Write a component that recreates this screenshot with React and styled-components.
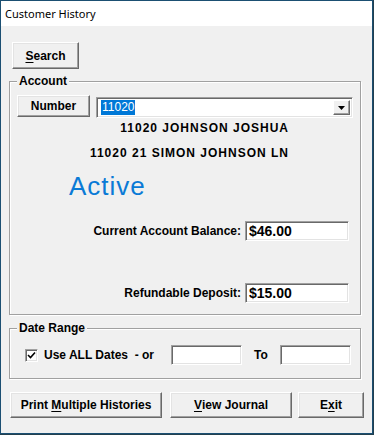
import React from 'react'
import styled, { createGlobalStyle } from 'styled-components'

const GlobalStyle = createGlobalStyle`
  html, body {
    margin: 0;
    padding: 0;
    background: #23404f;
  }
  body {
    font-family: "Liberation Sans", Arial, sans-serif;
  }
`

const Window = styled.div`
  width: 371px;
  height: 432px;
  border: 1px solid #1b4f72;
  background: #f0f0f0;
  display: flex;
  flex-direction: column;
`

const TitleBar = styled.div`
  height: 25px;
  background: #fff;
  display: flex;
  align-items: center;
  padding-left: 4px;
  font-family: "Noto Sans", "Open Sans", sans-serif;
  font-size: 11px;
  color: #000;
`

const Body = styled.div`
  flex: 1;
  padding: 16px 10px 0 8px;
  display: flex;
  flex-direction: column;
  align-items: flex-start;
`

const Button = styled.button`
  box-sizing: border-box;
  width: ${p => p.$w}px;
  height: ${p => p.$h || 26}px;
  margin: 0;
  margin-left: ${p => p.$ml || 0}px;
  padding: 0;
  background: #f0f0f0;
  border: 1px solid;
  border-color: #fff #696969 #696969 #fff;
  box-shadow: inset -1px -1px 0 #a0a0a0, inset 1px 1px 0 #e3e3e3;
  font-family: "Liberation Sans", Arial, sans-serif;
  font-weight: bold;
  font-size: 12px;
  color: #000;
  display: flex;
  align-items: center;
  justify-content: center;

  & u {
    text-decoration: underline;
    text-underline-offset: 2px;
  }
`

const Group = styled.div`
  position: relative;
  box-sizing: border-box;
  width: 352px;
  margin-top: ${p => p.$mt}px;
  border: 1px solid #a0a0a0;
  box-shadow: inset 1px 1px 0 #fff, 1px 1px 0 #fff;
  padding: ${p => p.$pad};
  display: flex;
  flex-direction: column;
`

const Legend = styled.span`
  position: absolute;
  top: -8px;
  left: 7px;
  padding: 0 2px;
  background: #f0f0f0;
  font-weight: bold;
  font-size: 12px;
  line-height: 14px;
  color: #000;
`

const Row = styled.div`
  display: flex;
  align-items: ${p => p.$align || 'center'};
  margin-top: ${p => p.$mt || 0}px;
`

const Sunken = styled.div`
  box-sizing: border-box;
  width: ${p => p.$w}px;
  height: ${p => p.$h || 20}px;
  margin-left: ${p => p.$ml || 0}px;
  margin-top: ${p => p.$mt || 0}px;
  background: #fff;
  border: 1px solid;
  border-color: #a0a0a0 #fff #fff #a0a0a0;
  box-shadow: inset 1px 1px 0 #696969, inset -1px -1px 0 #e3e3e3;
  display: flex;
  align-items: center;
  padding-left: 3px;
  font-weight: bold;
  font-size: 14px;
  color: #000;
`

const Combo = styled(Sunken)`
  padding: 2px 2px 2px 4px;
  align-items: stretch;
  font-weight: normal;
  font-size: 12px;
`

const Selected = styled.span`
  align-self: center;
  background: #0078d7;
  color: #fff;
  padding: 1px 1px;
  line-height: 13px;
`

const DropButton = styled.div`
  margin-left: auto;
  box-sizing: border-box;
  width: 17px;
  background: #f0f0f0;
  border: 1px solid;
  border-color: #fff #696969 #696969 #fff;
  box-shadow: inset -1px -1px 0 #a0a0a0;
  display: flex;
  align-items: center;
  justify-content: center;
`

const InfoLine = styled.div`
  width: 272px;
  margin-top: ${p => p.$mt}px;
  text-align: right;
  font-weight: bold;
  font-size: 12px;
  line-height: 14px;
  letter-spacing: 1px;
  color: #000;
`

const Status = styled.div`
  margin-top: 13px;
  margin-left: 52px;
  font-size: 26px;
  line-height: 26px;
  letter-spacing: 1px;
  color: #0a7ad6;
`

const FieldLabel = styled.div`
  width: 224px;
  text-align: right;
  padding-right: 4px;
  font-weight: bold;
  font-size: 12px;
  color: #000;
`

const Check = styled.div`
  box-sizing: border-box;
  width: 13px;
  height: 13px;
  background: #fff;
  border: 1px solid;
  border-color: #a0a0a0 #fff #fff #a0a0a0;
  box-shadow: inset 1px 1px 0 #696969, inset -1px -1px 0 #e3e3e3;
  display: flex;
  align-items: center;
  justify-content: center;
`

const Text = styled.span`
  margin-left: ${p => p.$ml || 0}px;
  font-weight: bold;
  font-size: 12px;
  color: #000;
  white-space: pre;
`

const Footer = styled.div`
  display: flex;
  margin-top: 13px;
  margin-left: 1px;
`

export default function App() {
  return (
    <>
      <GlobalStyle />
      <Window>
        <TitleBar>Customer History</TitleBar>
        <Body>
          <Button $w={67} $h={27} $ml={3}>
            <u>S</u>earch
          </Button>

          <Group $mt={12} $pad="13px 0 11px 7px">
            <Legend>Account</Legend>
            <Row $align="flex-start">
              <Button $w={73} $h={22}>Number</Button>
              <Combo $w={257} $h={21} $ml={6} $mt={2}>
                <Selected>11020</Selected>
                <DropButton>
                  <svg width="7" height="4" viewBox="0 0 7 4">
                    <path d="M0 0H7L3.5 4Z" fill="#000" />
                  </svg>
                </DropButton>
              </Combo>
            </Row>
            <InfoLine $mt={3}>11020 JOHNSON JOSHUA</InfoLine>
            <InfoLine $mt={11}>11020 21 SIMON JOHNSON LN</InfoLine>
            <Status>Active</Status>
            <Row $mt={22}>
              <FieldLabel>Current Account Balance:</FieldLabel>
              <Sunken $w={104}>$46.00</Sunken>
            </Row>
            <Row $mt={42}>
              <FieldLabel>Refundable Deposit:</FieldLabel>
              <Sunken $w={104}>$15.00</Sunken>
            </Row>
          </Group>

          <Group $mt={13} $pad="16px 0 13px 15px">
            <Legend>Date Range</Legend>
            <Row>
              <Check>
                <svg width="9" height="9" viewBox="0 0 9 9">
                  <path d="M1 4L3.5 6.5L8 1.5" fill="none" stroke="#000" strokeWidth="1.6" />
                </svg>
              </Check>
              <Text $ml={6}>Use ALL Dates  - or</Text>
              <Sunken $w={71} $ml={17} />
              <Text $ml={12}>To</Text>
              <Sunken $w={71} $ml={12} />
            </Row>
          </Group>

          <Footer>
            <Button $w={152}>
              Print&nbsp;<u>M</u>ultiple Histories
            </Button>
            <Button $w={122} $ml={8}>
              <u>V</u>iew Journal
            </Button>
            <Button $w={66} $ml={6}>
              E<u>x</u>it
            </Button>
          </Footer>
        </Body>
      </Window>
    </>
  )
}
